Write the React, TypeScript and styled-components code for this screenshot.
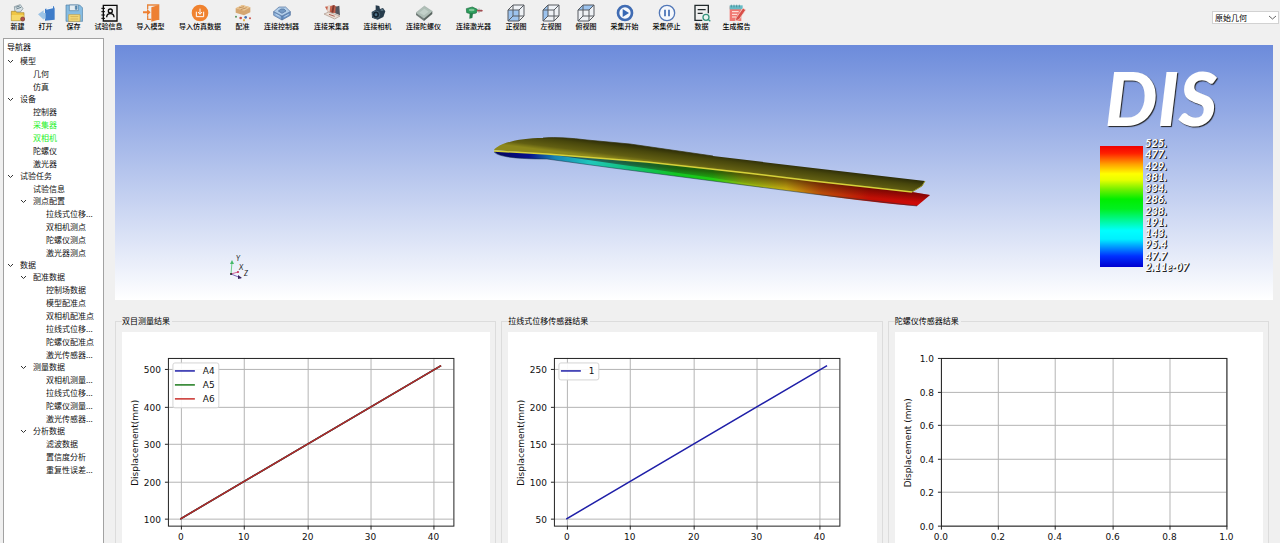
import React from 'react';
import styled, { createGlobalStyle } from 'styled-components';

const GlobalStyle = createGlobalStyle`
  * { box-sizing: border-box; }
  body {
    margin: 0;
    background: #f0f0f0;
    color: #000;
    font-family: "Noto Sans CJK SC", "Liberation Sans", sans-serif;
    font-size: 8px;
  }
`;

/* ---------- layout ---------- */

const Window = styled.div`
  display: flex;
  flex-direction: column;
  height: 100vh;
  overflow: hidden;
`;

const Toolbar = styled.header`
  display: flex;
  align-items: flex-start;
  gap: 13px;
  height: 38px;
  padding: 4px 1px 0 10px;
  flex: none;
`;

const ToolButton = styled.button<{ $width: number }>`
  display: flex;
  flex-direction: column;
  align-items: center;
  flex: none;
  width: ${(p) => p.$width}px;
  padding: 0;
  border: 0;
  background: none;
  color: #000;
  font: inherit;
  font-size: 7px;
  font-weight: 500;
  line-height: 9px;
  white-space: nowrap;
  cursor: pointer;
`;

const ToolIcon = styled.svg`
  display: block;
  width: 18px;
  height: 18px;
`;

const SelectBox = styled.label`
  display: flex;
  align-items: center;
  margin: 7px 0 0 auto;
  padding-right: 2px;
  border: 1px solid #d2d2d2;
  background: #fff;
`;

const Select = styled.select`
  appearance: none;
  width: 56px;
  height: 11px;
  padding: 0 0 0 2px;
  border: 0;
  background: none;
  color: #000;
  font: inherit;
  line-height: 11px;
  outline: none;
`;

const SelectArrow = styled.svg`
  width: 7px;
  height: 5px;
`;

const Body = styled.div`
  display: flex;
  flex: 1;
  min-height: 0;
  padding-left: 3px;
`;

const Sidebar = styled.nav`
  flex: none;
  width: 101px;
  padding: 1px 2px 0 3px;
  border: 1px solid #a2a2a2;
  border-bottom: 0;
  background: #fff;
  overflow: hidden;
`;

const SidebarTitle = styled.h1`
  margin: 0 0 2px;
  font-size: 8px;
  font-weight: 400;
  line-height: 13px;
`;

const TreeList = styled.ul`
  margin: 0;
  padding: 0;
  list-style: none;
`;

const TreeRow = styled.div<{ $level: number; $branch: boolean; $active: boolean }>`
  display: flex;
  align-items: center;
  height: ${(p) => (p.$branch ? 12 : 13)}px;
  padding-left: ${(p) => p.$level * 13}px;
  color: ${(p) => (p.$active ? '#1ff02a' : '#111')};
  line-height: 12px;
  white-space: nowrap;
`;

const Chevron = styled.svg<{ $hidden: boolean }>`
  width: 7px;
  height: 5px;
  margin-right: 6px;
  flex: none;
  visibility: ${(p) => (p.$hidden ? 'hidden' : 'visible')};
`;

const Main = styled.main`
  flex: 1;
  min-width: 0;
  padding: 7px 7px 0 11px;
`;

const Viewport = styled.section`
  display: flex;
  background: linear-gradient(#6c8bdb, #fff);
`;

const Scene = styled.svg`
  display: block;
  flex: 1;
  min-width: 0;
`;

const ScalePanel = styled.aside`
  flex: none;
  width: 173px;
  padding-top: 14px;
`;

const ScaleTitle = styled.h2`
  margin: 0;
  padding-left: 5px;
  color: #fff;
  font: italic 900 74px/78px Lato, sans-serif;
  text-shadow: 1px 1px 1px #222;
`;

const Scale = styled.div`
  display: flex;
  gap: 2px;
`;

const ScaleBar = styled.div`
  width: 43px;
  margin: 9px 0 5px;
  background: linear-gradient(
    #f00000 0%, #ff2000 6%, #ffa000 15%, #ffff00 23%, #e8ff00 28%, #70f000 36%,
    #00ee00 44%, #00f020 52%, #00f890 61%, #00ffff 70%, #00f0ff 77%, #0090ff 84%,
    #0030ff 91%, #0000d0 100%
  );
`;

const ScaleLabels = styled.ol`
  display: flex;
  flex-direction: column;
  justify-content: space-between;
  height: 135px;
  margin: 0;
  padding: 0;
  list-style: none;
  color: #fff;
  font: italic 700 11px/11px Lato, sans-serif;
  text-shadow: 1px 1px 0 #222, 1px 0 0 #555;
`;

const Charts = styled.div`
  display: grid;
  grid-template-columns: repeat(3, 1fr);
  gap: 5px;
  margin-top: 15px;
  padding-right: 4px;
`;

const Group = styled.fieldset`
  min-width: 0;
  margin: 0;
  padding: 5px 5px 8px 6px;
  border: 1px solid #dcdcdc;
`;

const GroupTitle = styled.legend`
  padding: 0 2px 0 0;
  line-height: 12px;
`;

const Figure = styled.svg`
  display: block;
  width: 100%;
  background: #fff;
  font-family: "DejaVu Sans", sans-serif;
  font-size: 9px;
`;

/* ---------- toolbar icons, drawn on a 54 unit grid ---------- */

const Cube = ({ face }: { face: string }) => (
  <g stroke="#565b61" strokeWidth="3" fill="none" strokeLinejoin="round">
    <path d="M3 18H36V51H3ZM18 3H51V36H18Z" fill="#eef1f5" stroke="none" />
    <path d={face} fill="#9cc3ee" stroke="none" />
    <path d="M3 18H36V51H3ZM3 18L18 3H51L36 18M51 3V36L36 51M18 3V36H51M18 36L3 51" />
  </g>
);

const icons: Record<string, React.ReactNode> = {
  create: (
    <g>
      <path d="M16 8L34 2L42 14L34 24H18Z" fill="#d7e0e4" stroke="#71858e" strokeWidth="2" />
      <path d="M20 10L32 6M22 15L36 10" stroke="#6c8591" strokeWidth="3" />
      <path d="M7 22H20L24 26H45V50H7Z" fill="#efc544" stroke="#a8842a" strokeWidth="2" />
      <path d="M8 33H44V49H8Z" fill="#f6d868" />
      <circle cx="41" cy="45" r="6" fill="#b4524c" stroke="#7b3935" strokeWidth="2" />
    </g>
  ),
  open: (
    <g>
      <path d="M24 15L50 6L53 14V47L24 50Z" fill="#3e7cc9" />
      <path d="M28 13L48 5V13L28 17Z" fill="#eef3f8" />
      <path d="M3 31L20 19V27H26V44H20V47Z" fill="#9bc3e6" />
    </g>
  ),
  save: (
    <g stroke="#4d7da5" strokeWidth="2">
      <path d="M3 3H44L53 12V52H3Z" fill="#86bce2" />
      <path d="M13 3H40V20H13Z" fill="#e5edf2" />
      <path d="M31 6H36V16H31Z" fill="#5a8cb4" />
      <path d="M11 32H45V52H11Z" fill="#f5dc7c" stroke="#c39f45" />
      <path d="M16 38H40M16 45H40" stroke="#c39f45" />
    </g>
  ),
  info: (
    <g fill="none" stroke="#0b0b0b" strokeWidth="4">
      <path d="M10 4H51V51H10Z" />
      <path d="M4 13H15M4 23H15M4 33H15M4 43H15" strokeWidth="3" />
      <circle cx="31" cy="21" r="6" />
      <path d="M20 40C20 25 42 25 42 40" />
    </g>
  ),
  importModel: (
    <g>
      <path d="M17 16V3H50V46H42" fill="none" stroke="#e8853c" strokeWidth="4" />
      <path d="M28 10L49 3V47L28 53Z" fill="#ee8032" />
      <path d="M17 34V46H28" fill="none" stroke="#e8853c" strokeWidth="4" />
      <path d="M3 22H15V15L26 25L15 35V28H3Z" fill="#ee8032" />
    </g>
  ),
  importData: (
    <g>
      <circle cx="27" cy="27" r="25" fill="#f0822f" />
      <path d="M16 23V38H38V23M27 14V29M21 24L27 31L33 24" fill="none" stroke="#fff" strokeWidth="3" />
    </g>
  ),
  register: (
    <g>
      <path d="M5 13L25 3L49 10V25L30 34L5 26Z" fill="#d5a671" />
      <path d="M5 13L25 3L49 10L30 20Z" fill="#edc996" />
      <path d="M14 12L30 8M20 17L38 11" stroke="#aa7645" strokeWidth="2" />
      <circle cx="6" cy="38" r="3" fill="#58915b" />
      <circle cx="20" cy="42" r="4" fill="#cc5149" />
      <circle cx="35" cy="40" r="4" fill="#4772b3" />
      <circle cx="48" cy="43" r="3" fill="#cc5149" />
      <path d="M27 46h6v6h-6z" fill="#e5b34b" />
    </g>
  ),
  controller: (
    <g stroke="#4c6d9b" strokeWidth="2" strokeLinejoin="round">
      <path d="M2 23L27 36V48L2 34Z" fill="#88aed9" />
      <path d="M52 23L27 36V48L52 34Z" fill="#6a94c7" />
      <path d="M2 23L18 9H38L52 23L27 36Z" fill="#b2cee9" />
      <path d="M16 21L24 15H33L39 21L27 28Z" fill="#7499c3" />
      <path d="M8 31L20 37M34 38L47 31" stroke="#e2eef8" />
    </g>
  ),
  collector: (
    <g>
      <path d="M6 8L34 4L47 12L42 28L15 25Z" fill="#c6624d" />
      <path d="M15 4L22 3L20 24L12 23Z" fill="#e7d7cc" />
      <path d="M29 4L35 4L31 26H25Z" fill="#80392f" />
      <path d="M38 8L49 5L51 34L37 28Z" fill="#54565e" />
      <path d="M3 30L17 24L51 36L35 45Z" fill="#eadcd2" stroke="#a99386" strokeWidth="2" />
      <path d="M18 31L35 37" stroke="#ad6155" strokeWidth="3" />
    </g>
  ),
  camera: (
    <g>
      <path d="M20 4L31 6L33 15L42 12L49 22L43 39L26 47L9 41L8 24L20 17Z" fill="#273c4c" />
      <circle cx="21" cy="32" r="11" fill="#142330" stroke="#607e91" strokeWidth="2" />
      <circle cx="21" cy="32" r="4" fill="#4e748c" />
      <path d="M35 18L43 18" stroke="#7d97a5" strokeWidth="3" />
    </g>
  ),
  gyro: (
    <g>
      <path d="M3 26L27 43V51L3 33Z" fill="#707c78" />
      <path d="M52 22L27 43V51L52 30Z" fill="#58645f" />
      <path d="M3 26L28 6L52 22L27 43Z" fill="#afbfb7" stroke="#87958f" />
      <path d="M13 26L28 14L41 23L27 34Z" fill="#c2d0c9" />
    </g>
  ),
  laser: (
    <g>
      <path d="M4 14L22 9L37 16L34 27L20 30L5 26Z" fill="#2c9c5b" stroke="#1f6d42" strokeWidth="2" />
      <ellipse cx="20" cy="18" rx="9" ry="4" fill="#7cc796" />
      <path d="M14 28L24 28L22 42L13 44Z" fill="#237e4a" />
      <path d="M36 20H53" stroke="#b95357" strokeWidth="4" />
      <path d="M42 14V26M48 16V24" stroke="#744649" strokeWidth="2" />
    </g>
  ),
  front: <Cube face="M3 18H36V51H3Z" />,
  left: <Cube face="M3 18L18 3V36L3 51Z" />,
  top: <Cube face="M3 18L18 3H51L36 18Z" />,
  start: (
    <g>
      <circle cx="27" cy="27" r="21" fill="#f5f8fc" stroke="#406cb3" strokeWidth="8" />
      <path d="M20 15L39 27L20 39Z" fill="#3768b4" />
    </g>
  ),
  stop: (
    <g>
      <circle cx="27" cy="27" r="23" fill="#f5f8fc" stroke="#5278b8" strokeWidth="4" />
      <path d="M21 17V37M33 17V37" stroke="#406cb3" strokeWidth="5" />
    </g>
  ),
  data: (
    <g fill="none">
      <path d="M28 49H6V4H46V28" stroke="#222a2c" strokeWidth="4" />
      <path d="M14 17H38M14 28H29" stroke="#222a2c" strokeWidth="4" />
      <circle cx="39" cy="40" r="9" stroke="#36947d" strokeWidth="4" fill="#e9f4f0" />
      <path d="M45 46L52 52" stroke="#36947d" strokeWidth="4" />
    </g>
  ),
  report: (
    <g>
      <path d="M5 7H40V51H5Z" fill="#f27771" />
      <path d="M5 4H44V16H5Z" fill="#69bcc6" />
      <path d="M10 2V10M18 2V10M26 2V10M34 2V10" stroke="#377c87" strokeWidth="2" />
      <path d="M12 23H32M12 31H28M12 39H24" stroke="#fff0e8" strokeWidth="3" />
      <path d="M24 42L45 12L53 18L33 47L22 51Z" fill="#d84f49" stroke="#f5e4dc" strokeWidth="2" />
    </g>
  ),
};

const tools: [string, string][] = [
  ['create', '新建'],
  ['open', '打开'],
  ['save', '保存'],
  ['info', '试验信息'],
  ['importModel', '导入模型'],
  ['importData', '导入仿真数据'],
  ['register', '配准'],
  ['controller', '连接控制器'],
  ['collector', '连接采集器'],
  ['camera', '连接相机'],
  ['gyro', '连接陀螺仪'],
  ['laser', '连接激光器'],
  ['front', '正视图'],
  ['left', '左视图'],
  ['top', '俯视图'],
  ['start', '采集开始'],
  ['stop', '采集停止'],
  ['data', '数据'],
  ['report', '生成报告'],
];

/* Button width by the number of characters in its caption. */
const captionWidth: Record<number, number> = { 2: 15, 3: 22, 4: 29, 5: 37, 6: 44 };

/* ---------- navigation tree ---------- */

type Node = { label: string; active?: boolean; children?: Node[] };

const leaf = (label: string): Node => ({ label });

const tree: Node[] = [
  { label: '模型', children: [leaf('几何'), leaf('仿真')] },
  {
    label: '设备',
    children: [
      leaf('控制器'),
      { label: '采集器', active: true },
      { label: '双相机', active: true },
      leaf('陀螺仪'),
      leaf('激光器'),
    ],
  },
  {
    label: '试验任务',
    children: [
      leaf('试验信息'),
      {
        label: '测点配置',
        children: ['拉线式位移...', '双相机测点', '陀螺仪测点', '激光器测点'].map(leaf),
      },
    ],
  },
  {
    label: '数据',
    children: [
      {
        label: '配准数据',
        children: [
          '控制场数据',
          '模型配准点',
          '双相机配准点',
          '拉线式位移...',
          '陀螺仪配准点',
          '激光传感器...',
        ].map(leaf),
      },
      {
        label: '测量数据',
        children: ['双相机测量...', '拉线式位移...', '陀螺仪测量...', '激光传感器...'].map(leaf),
      },
      {
        label: '分析数据',
        children: ['滤波数据', '置信度分析', '重复性误差...'].map(leaf),
      },
    ],
  },
];

const Tree = ({ nodes, level = 0 }: { nodes: Node[]; level?: number }) => (
  <TreeList>
    {nodes.map((node) => (
      <li key={node.label}>
        <TreeRow $level={level} $branch={!!node.children} $active={!!node.active}>
          <Chevron $hidden={!node.children} viewBox="0 0 7 5" aria-hidden="true">
            <path d="M1 1L3.500 3.500L6 1" fill="none" stroke="#333" />
          </Chevron>
          {node.label}
        </TreeRow>
        {node.children && <Tree nodes={node.children} level={level + 1} />}
      </li>
    ))}
  </TreeList>
);

/* ---------- 3D view ---------- */

const WingScene = () => (
  <Scene viewBox="0 0 985 255" role="img" aria-label="DIS">
    <defs>
      <linearGradient id="upper" gradientUnits="userSpaceOnUse" x1="600" y1="110" x2="598" y2="126">
        <stop offset="0" stopColor="#2c2c08" />
        <stop offset="0.3" stopColor="#47460c" />
        <stop offset="0.75" stopColor="#625f12" />
        <stop offset="1" stopColor="#8d881b" />
      </linearGradient>
      <linearGradient id="root" gradientUnits="userSpaceOnUse" x1="379" y1="0" x2="520" y2="0">
        <stop offset="0" stopColor="#a8a222" stopOpacity="0.9" />
        <stop offset="0.3" stopColor="#68651a" stopOpacity="0.5" />
        <stop offset="1" stopColor="#55520f" stopOpacity="0" />
      </linearGradient>
      <linearGradient id="lower" gradientUnits="userSpaceOnUse" x1="379" y1="0" x2="815" y2="0">
        <stop offset="0" stopColor="#04045c" />
        <stop offset="0.08" stopColor="#07108c" />
        <stop offset="0.14" stopColor="#1684b4" />
        <stop offset="0.22" stopColor="#20c8bc" />
        <stop offset="0.31" stopColor="#12c078" />
        <stop offset="0.42" stopColor="#12c422" />
        <stop offset="0.5" stopColor="#20cc12" />
        <stop offset="0.57" stopColor="#8cb80f" />
        <stop offset="0.67" stopColor="#c4a810" />
        <stop offset="0.75" stopColor="#b84c08" />
        <stop offset="0.86" stopColor="#c01005" />
        <stop offset="1" stopColor="#d00808" />
      </linearGradient>
      <linearGradient id="shade" gradientUnits="userSpaceOnUse" x1="700" y1="137" x2="699" y2="147">
        <stop offset="0" stopColor="#200" stopOpacity="0.5" />
        <stop offset="1" stopColor="#200" stopOpacity="0" />
      </linearGradient>
    </defs>
    <path
      d="M379 106C382 112 402 114 432 114L498 123L598 136L698 149C740 155 775 159 802 161L815 150L797 147L632 125L432 108Z"
      fill="url(#lower)"
    />
    <path d="M432 109L532 117L632 125L797 147L815 150L802 161L698 149L598 133Z" fill="url(#shade)" />
    <path d="M379 107C384 112 402 114 432 114L498 123L598 136L698 149L802 161" fill="none" stroke="#153040" strokeOpacity="0.5" />
    <path
      d="M379 105C383 99 402 93 428 93C442 92 456 93 472 95L515 99L598 111L698 123L810 136L807 141L797 147L698 136L632 128L532 117L432 109Z"
      fill="url(#upper)"
    />
    <path
      d="M379 105C383 99 402 93 428 93C442 92 456 93 472 95L515 99L520 100V115L432 109Z"
      fill="url(#root)"
    />
    <path d="M428 93C442 92 456 93 472 95L515 99L598 111" fill="none" stroke="#33330b" strokeOpacity="0.7" />
    <path d="M379 106L432 109L532 117L632 128L698 136L797 147" fill="none" stroke="#d6d13a" strokeWidth="1.500" />
    <path d="M797 147L807 141L810 136" fill="none" stroke="#98952c" />
    <g fill="none">
      <path d="M116 229L117 217" stroke="#6fd08a" />
      <path d="M115 219L117 215L119 219Z" fill="#46b968" />
      <path d="M116 229L123 227" stroke="#d0679a" />
      <circle cx="123" cy="227" r="1" fill="#c02850" />
      <path d="M116 229L126 233" stroke="#8069bb" />
      <path d="M123 230L127 233L123 234Z" fill="#38235f" />
      <circle cx="116" cy="229" r="1" fill="#222" />
    </g>
    <g fontFamily="Lato, sans-serif" fontSize="7" fontStyle="italic" fill="#222">
      <text x="121" y="216">Y</text>
      <text x="124" y="225">X</text>
      <text x="129" y="231">Z</text>
    </g>
  </Scene>
);

const scaleValues = ['525.', '477.', '429.', '381.', '334.', '286.', '238.', '191.', '143.', '95.4', '47.7', '2.11e-07'];

/* ---------- charts ---------- */

type Tick = { at: number; text: string };
type Series = { name: string; color: string; key: string };

const AXES = { left: 46, right: 332, top: 26, bottom: 194 };

const ticks = (labels: string[], first: number, last: number): Tick[] =>
  labels.map((text, i) => ({ at: Math.round(first + ((last - first) * i) / (labels.length - 1)), text }));

const Chart = ({ title, yLabel, x, y, series }: { title: string; yLabel: string; x: Tick[]; y: Tick[]; series: Series[] }) => (
  <Group>
    <GroupTitle>{title}</GroupTitle>
    <Figure viewBox="0 0 369 218" role="img" aria-label={title}>
      <g stroke="#b4b4b4">
        {x.map((t) => (
          <line key={t.text} x1={t.at + 0.5} x2={t.at + 0.5} y1={AXES.top} y2={AXES.bottom} />
        ))}
        {y.map((t) => (
          <line key={t.text} x1={AXES.left} x2={AXES.right} y1={t.at + 0.5} y2={t.at + 0.5} />
        ))}
      </g>
      {series.map((s) => (
        <line key={s.name} x1="59" y1="187" x2="319" y2="34" stroke={s.color} strokeWidth="1.500" strokeLinecap="square" />
      ))}
      <g stroke="#222">
        {x.map((t) => (
          <line key={t.text} x1={t.at + 0.5} x2={t.at + 0.5} y1={AXES.bottom} y2={AXES.bottom + 4} />
        ))}
        {y.map((t) => (
          <line key={t.text} x1={AXES.left - 3} x2={AXES.left} y1={t.at + 0.5} y2={t.at + 0.5} />
        ))}
        <rect x={AXES.left + 0.5} y={AXES.top + 0.5} width={AXES.right - AXES.left} height={AXES.bottom - AXES.top} fill="none" />
      </g>
      <g fill="#111">
        {x.map((t) => (
          <text key={t.text} x={t.at} y="208" textAnchor="middle">{t.text}</text>
        ))}
        {y.map((t) => (
          <text key={t.text} x="39" y={t.at + 4} textAnchor="end">{t.text}</text>
        ))}
        <text transform="translate(16 111) rotate(-90)" textAnchor="middle">{yLabel}</text>
      </g>
      {series.length > 0 && (
        <g>
          <rect x="51" y="31" width={series.length > 1 ? 46 : 40} height={series.length * 14 + 3} rx="2" fill="#fff" fillOpacity="0.9" stroke="#d4d4d4" />
          {series.map((s, i) => (
            <g key={s.name}>
              <line x1="53" x2="73" y1={39 + i * 14} y2={39 + i * 14} stroke={s.key} strokeWidth="1.500" />
              <text x="81" y={42 + i * 14} fill="#111">{s.name}</text>
            </g>
          ))}
        </g>
      )}
    </Figure>
  </Group>
);

const timeTicks = ticks(['0', '10', '20', '30', '40'], 59, 312);
const unit = ['0.0', '0.2', '0.4', '0.6', '0.8', '1.0'];

export default function App() {
  return (
    <Window>
      <GlobalStyle />
      <Toolbar>
        {tools.map(([icon, label]) => (
          <ToolButton key={icon} type="button" $width={captionWidth[label.length]}>
            <ToolIcon viewBox="0 0 54 54" aria-hidden="true">{icons[icon]}</ToolIcon>
            {label}
          </ToolButton>
        ))}
        <SelectBox>
          <Select aria-label="显示内容" defaultValue="原始几何">
            <option>原始几何</option>
          </Select>
          <SelectArrow viewBox="0 0 7 5" aria-hidden="true">
            <path d="M0 1L3.500 4L7 1" fill="none" stroke="#666" />
          </SelectArrow>
        </SelectBox>
      </Toolbar>
      <Body>
        <Sidebar aria-label="导航器">
          <SidebarTitle>导航器</SidebarTitle>
          <Tree nodes={tree} />
        </Sidebar>
        <Main>
          <Viewport>
            <WingScene />
            <ScalePanel>
              <ScaleTitle>DIS</ScaleTitle>
              <Scale>
                <ScaleBar />
                <ScaleLabels>
                  {scaleValues.map((v) => (
                    <li key={v}>{v}</li>
                  ))}
                </ScaleLabels>
              </Scale>
            </ScalePanel>
          </Viewport>
          <Charts>
            <Chart
              title="双目测量结果"
              yLabel="Displacement(mm)"
              x={timeTicks}
              y={ticks(['500', '400', '300', '200', '100'], 37, 187)}
              series={[
                { name: 'A4', color: '#1f1fa8', key: '#1f1fa8' },
                { name: 'A5', color: '#1c7a1c', key: '#1c7a1c' },
                { name: 'A6', color: '#b3262b', key: '#c9302c' },
              ]}
            />
            <Chart
              title="拉线式位移传感器结果"
              yLabel="Displacement(mm)"
              x={timeTicks}
              y={ticks(['250', '200', '150', '100', '50'], 37, 187)}
              series={[{ name: '1', color: '#1f1fa8', key: '#1f1fa8' }]}
            />
            <Chart
              title="陀螺仪传感器结果"
              yLabel="Displacement (mm)"
              x={ticks(unit, AXES.left, AXES.right)}
              y={ticks([...unit].reverse(), AXES.top, AXES.bottom)}
              series={[]}
            />
          </Charts>
        </Main>
      </Body>
    </Window>
  );
}
